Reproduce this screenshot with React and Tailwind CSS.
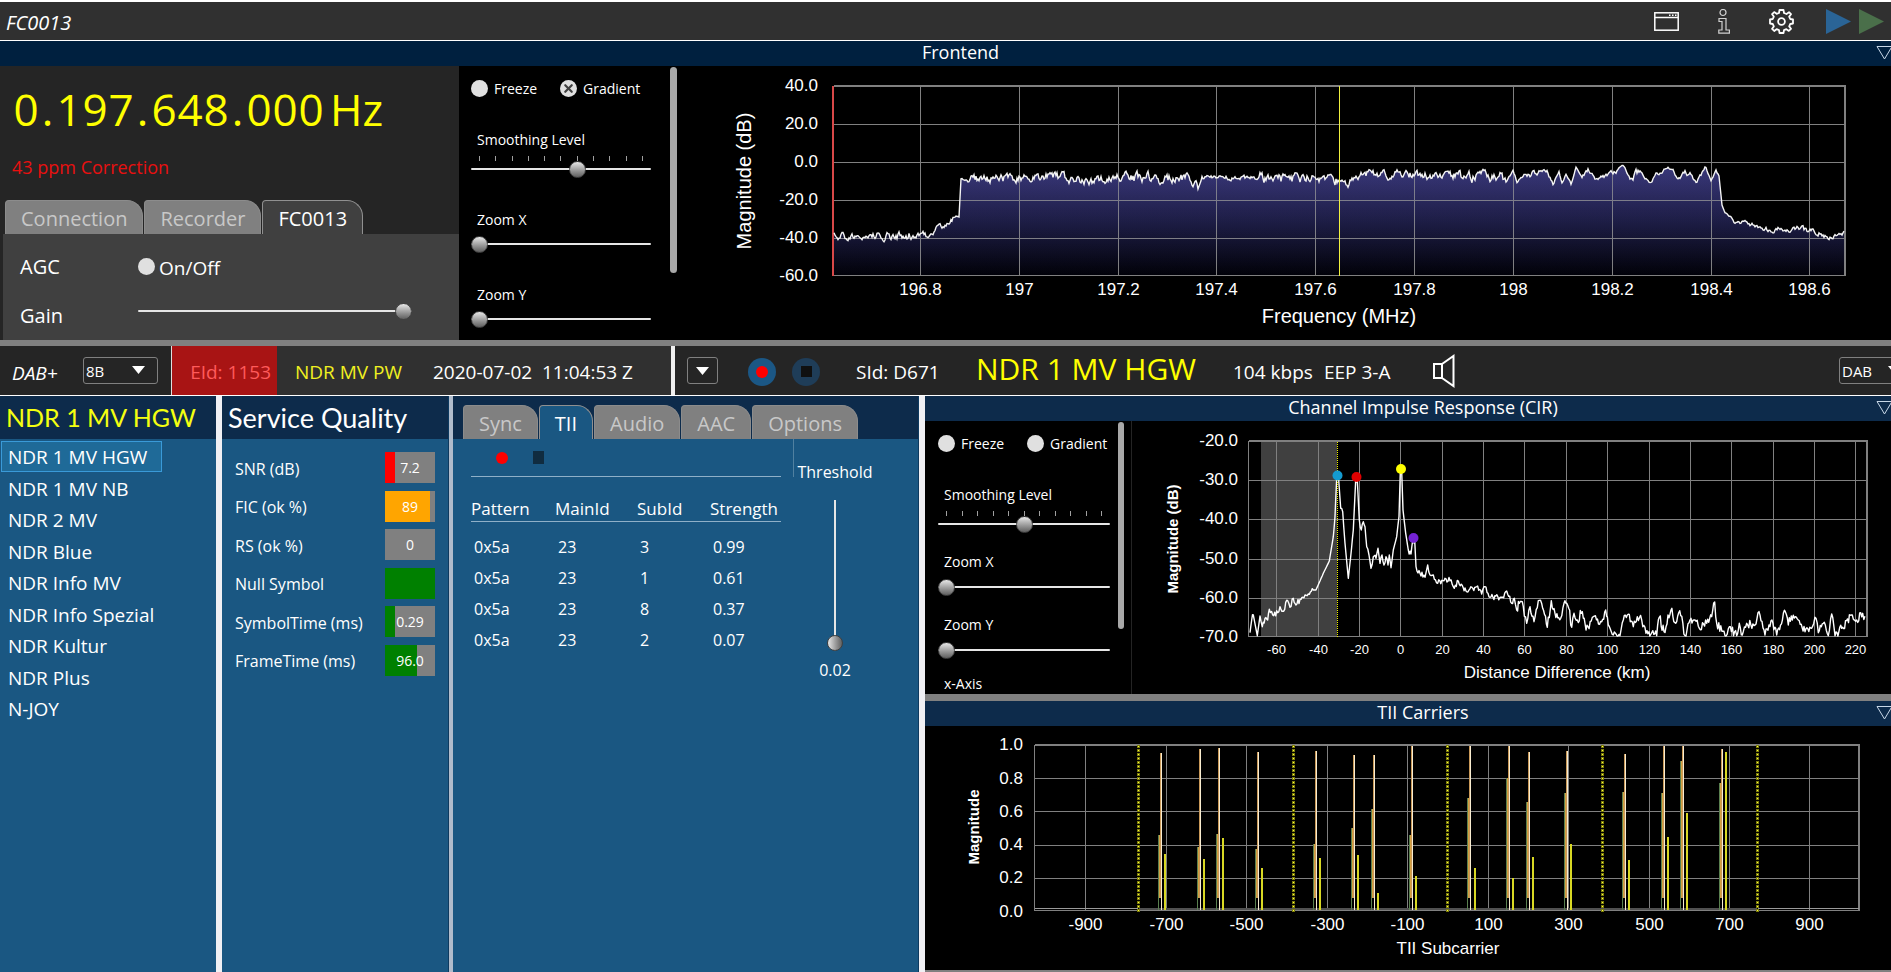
import React, { useState } from 'react';
import { X } from 'lucide-react';

const SERVICES = [
  'NDR 1 MV HGW',
  'NDR 1 MV NB',
  'NDR 2 MV',
  'NDR Blue',
  'NDR Info MV',
  'NDR Info Spezial',
  'NDR Kultur',
  'NDR Plus',
  'N-JOY',
];

const QUALITY = [
  { label: 'SNR (dB)', value: '7.2', fill: 20, color: 'bg-[#ff0000]' },
  { label: 'FIC (ok %)', value: '89', fill: 90, color: 'bg-[#ffa500]' },
  { label: 'RS (ok %)', value: '0', fill: 0, color: 'bg-[#008000]' },
  { label: 'Null Symbol', value: '', fill: 100, color: 'bg-[#008000]' },
  { label: 'SymbolTime (ms)', value: '0.29', fill: 20, color: 'bg-[#008000]' },
  { label: 'FrameTime (ms)', value: '96.0', fill: 64, color: 'bg-[#008000]' },
];

const TII_ROWS = [
  ['0x5a', '23', '3', '0.99'],
  ['0x5a', '23', '1', '0.61'],
  ['0x5a', '23', '8', '0.37'],
  ['0x5a', '23', '2', '0.07'],
];

// [left x, left top, main x, main top, right x, right top]
const CARRIERS = [
  [1159, 835, 1161, 753, 1165, 854],
  [1198, 847, 1200, 749, 1204, 859],
  [1217, 834, 1219, 748, 1223, 838],
  [1256, 849, 1258, 752, 1262, 868],
  [1314, 844, 1316, 751, 1320, 858],
  [1352, 828, 1354, 755, 1358, 855],
  [1372, 809, 1374, 755, 1378, 893],
  [1410, 835, 1412, 746, 1416, 876],
  [1468, 798, 1470, 746, 1475, 868],
  [1507, 778, 1509, 746, 1513, 878],
  [1527, 802, 1529, 752, 1533, 857],
  [1565, 793, 1567, 751, 1571, 844],
  [1623, 792, 1625, 754, 1629, 860],
  [1662, 793, 1664, 746, 1668, 837],
  [1681, 761, 1683, 746, 1687, 813],
  [1720, 783, 1722, 749, 1726, 752],
];

// impulse response, in thirds of a pixel
const CIR_HEAD = [
  [1050, 728], [1055, 690], [1060, 675], [1072, 737], [1080, 678], [1087, 710], [1095, 685], [1103, 690],
  [1108, 658], [1118, 675], [1133, 668], [1140, 650], [1148, 664], [1163, 632], [1170, 652], [1180, 625],
  [1188, 645], [1200, 628], [1215, 615], [1225, 612], [1240, 600], [1248, 600], [1270, 550], [1288, 513],
  [1300, 440], [1305, 380], [1310, 265], [1316, 270], [1322, 355], [1328, 365], [1335, 460], [1345, 565],
  [1352, 500], [1360, 420], [1367, 270], [1372, 270], [1378, 390], [1384, 420], [1390, 395], [1395, 410],
  [1400, 470], [1407, 495], [1413, 535], [1420, 500], [1428, 505], [1434, 475], [1440, 520], [1446, 495],
  [1452, 525], [1458, 500], [1464, 525], [1468, 495], [1473, 533], [1480, 480], [1490, 440], [1497, 380],
];
const CIR_TAIL = [
  [31, 245], [35, 245], [39, 360], [47, 430], [55, 480], [63, 492], [68, 450], [74, 450], [78, 530], [90, 550],
  [105, 562], [113, 525], [120, 555], [130, 555], [143, 580], [165, 565], [180, 572], [193, 595], [205, 573],
  [228, 603], [260, 590], [275, 612], [285, 590], [300, 622], [335, 622], [350, 603], [365, 640], [373, 625],
  [380, 660], [388, 640], [400, 650], [410, 700], [420, 650], [432, 695], [445, 632], [458, 655], [472, 712],
  [484, 632], [495, 670], [512, 685], [522, 640], [536, 655], [545, 712], [552, 670], [562, 690], [577, 665],
  [588, 720], [610, 680], [635, 695], [647, 660], [655, 705], [670, 735], [690, 737], [700, 690], [712, 675],
  [730, 710], [742, 680], [755, 690], [768, 730], [800, 737], [808, 682], [822, 725], [843, 660], [857, 700],
  [869, 662], [885, 737], [900, 690], [915, 690], [928, 715], [950, 700], [965, 680], [974, 636], [980, 700],
  [1005, 737], [1018, 710], [1040, 737], [1048, 700], [1057, 735], [1070, 700], [1095, 705], [1104, 668],
  [1125, 735], [1143, 692], [1160, 735], [1186, 665], [1195, 705], [1204, 678], [1225, 690], [1245, 725],
  [1265, 715], [1278, 685], [1285, 728], [1300, 700], [1315, 737], [1325, 672], [1335, 737], [1355, 715],
  [1387, 675], [1400, 690], [1418, 670], [1428, 700],
];
const CIR_ANCHORS = [
  ...CIR_HEAD.map(([x, y]) => [900 + x / 3, 390 + y / 3]),
  ...CIR_TAIL.map(([x, y]) => [1390 + x / 3, 390 + y / 3]),
];

// x, y, noise amplitude
const SPECTRUM_ANCHORS = [
  [834, 236, 4], [856, 235, 4], [860, 240, 3], [866, 236, 4], [908, 235, 4], [922, 234, 4], [927, 239, 2],
  [936, 230, 3], [946, 226, 3], [953, 217, 1], [959, 216, 1], [961, 179, 1], [968, 180, 4], [1054, 176, 5],
  [1088, 182, 4], [1120, 177, 5], [1196, 179, 2], [1198, 189, 0], [1202, 178, 2], [1260, 178, 5],
  [1350, 180, 4], [1356, 173, 4], [1450, 176, 5], [1502, 177, 5], [1506, 182, 1], [1513, 171, 1],
  [1517, 182, 1], [1524, 175, 3], [1548, 173, 2], [1553, 184, 1], [1559, 171, 1], [1562, 183, 1],
  [1566, 174, 1], [1571, 184, 1], [1576, 167, 1], [1582, 176, 3], [1589, 171, 2], [1595, 180, 2],
  [1624, 168, 2], [1630, 176, 4], [1641, 171, 2], [1647, 180, 3], [1662, 174, 3],
  [1668, 168, 1], [1673, 170, 1], [1678, 181, 2], [1685, 172, 3], [1697, 180, 2], [1706, 167, 1],
  [1711, 182, 1], [1716, 171, 1], [1719, 176, 0], [1722, 205, 0], [1725, 213, 1], [1734, 220, 2],
  [1762, 228, 3], [1788, 230, 3], [1811, 230, 3], [1828, 238, 2], [1845, 233, 3],
];

function makeRandom(seed) {
  let s = seed;
  return () => {
    s = (s * 16807) % 2147483647;
    return s / 2147483647 - 0.5;
  };
}

function spectrumPoints() {
  const rand = makeRandom(4711);
  const out = [];
  let drift = 0;
  for (let i = 0; i < SPECTRUM_ANCHORS.length - 1; i++) {
    const [x0, y0, a0] = SPECTRUM_ANCHORS[i];
    const [x1, y1] = SPECTRUM_ANCHORS[i + 1];
    for (let x = x0; x < x1; x++) {
      drift = drift * 0.6 + rand() * 2.4;
      const y = y0 + ((y1 - y0) * (x - x0)) / (x1 - x0);
      out.push(`${x},${(y + drift * a0 * 0.75).toFixed(1)}`);
    }
  }
  return out.join(' ');
}

function cirPoints() {
  const rand = makeRandom(1153);
  const out = [];
  for (let i = 0; i < CIR_ANCHORS.length - 1; i++) {
    const [x0, y0] = CIR_ANCHORS[i];
    const [x1, y1] = CIR_ANCHORS[i + 1];
    const smooth = x0 < 1435 && (Math.abs(y1 - y0) > 12 || (x0 > 1310 && x0 < 1330));
    const amp = x0 > 1515 ? 9 : 6;
    const n = Math.max(1, Math.round(x1 - x0));
    for (let k = 0; k < n; k++) {
      const y = y0 + ((y1 - y0) * k) / n + (smooth || k === 0 ? 0 : rand() * amp);
      out.push(`${(x0 + ((x1 - x0) * k) / n).toFixed(1)},${Math.min(y, 636).toFixed(1)}`);
    }
  }
  return out.join(' ');
}

const SPECTRUM = spectrumPoints();
const CIR = cirPoints();

const CHART_FONT = "font-['Liberation_Sans',Arial,sans-serif]";

const Grid = ({ xs, ys, left, right, top, bottom }) => (
  <g stroke="#808080" strokeWidth="1" shapeRendering="crispEdges">
    {xs.map((x) => <line key={x} x1={x} x2={x} y1={top} y2={bottom} />)}
    {ys.map((y) => <line key={y} x1={left} x2={right} y1={y} y2={y} />)}
    <line x1={left} x2={left} y1={top} y2={bottom} />
    <line x1={left} x2={right} y1={bottom} y2={bottom} />
    <path d={`M${left} ${top}H${right}V${bottom}`} fill="none" strokeWidth="2" />
  </g>
);

const AxisLabels = ({ items, size, anchor }) => (
  <g fill="#ffffff" fontSize={size} textAnchor={anchor}>
    {items.map(([text, x, y]) => <text key={text} x={x} y={y}>{text}</text>)}
  </g>
);

const SpectrumChart = () => {
  const ys = [124.5, 162.5, 200.5, 238.5];
  const xs = [920.5, 1019.5, 1118.5, 1216.5, 1315.5, 1414.5, 1513.5, 1612.5, 1711.5, 1809.5];
  const xText = ['196.8', '197', '197.2', '197.4', '197.6', '197.8', '198', '198.2', '198.4', '198.6'];
  const yText = ['40.0', '20.0', '0.0', '-20.0', '-40.0', '-60.0'];
  const area = `834,276 ${SPECTRUM} 1845,276`;
  return (
    <svg viewBox="680 66 1211 274" className={`block w-full h-full ${CHART_FONT}`} role="img" aria-label="Spectrum">
      <defs>
        <linearGradient id="spectrumFill" gradientUnits="userSpaceOnUse" x1="0" y1="166" x2="0" y2="276">
          <stop offset="0" stopColor="#343268" />
          <stop offset="0.5" stopColor="#19193a" />
          <stop offset="1" stopColor="#010108" />
        </linearGradient>
        <linearGradient id="spectrumTint" gradientUnits="userSpaceOnUse" x1="0" y1="166" x2="0" y2="276">
          <stop offset="0" stopColor="#6060ff" stopOpacity="0.12" />
          <stop offset="1" stopColor="#6060ff" stopOpacity="0" />
        </linearGradient>
      </defs>
      <polygon points={area} fill="url(#spectrumFill)" />
      <Grid xs={xs} ys={ys} left={833.5} right={1845} top={86} bottom={275.5} />
      <polygon points={area} fill="url(#spectrumTint)" />
      <line x1="833" x2="833" y1="86" y2="276" stroke="#d84848" strokeWidth="2" />
      <polyline points={SPECTRUM} fill="none" stroke="#f4f4f4" strokeWidth="1.4" />
      <line x1="1339.5" x2="1339.5" y1="86" y2="276" stroke="#f0f040" />
      <AxisLabels anchor="end" size="17" items={yText.map((t, i) => [t, 818, 91 + i * 38])} />
      <AxisLabels anchor="middle" size="17" items={xText.map((t, i) => [t, xs[i], 295])} />
      <text x="1339" y="323" fill="#ffffff" fontSize="20" textAnchor="middle">Frequency (MHz)</text>
      <text transform="translate(751 181) rotate(-90)" fill="#ffffff" fontSize="20" textAnchor="middle">Magnitude (dB)</text>
    </svg>
  );
};

const CirChart = () => {
  const ys = [480.5, 519.5, 559.5, 598.5];
  const xs = [1276.5, 1318.5, 1359.5, 1400.5, 1442.5, 1483.5, 1524.5, 1566.5, 1607.5, 1649.5, 1690.5, 1731.5, 1773.5, 1814.5, 1855.5];
  const yText = ['-20.0', '-30.0', '-40.0', '-50.0', '-60.0', '-70.0'];
  const yPos = [446, 485, 524, 564, 603, 642];
  return (
    <svg viewBox="1132 421 759 273" className={`block w-full h-full ${CHART_FONT}`} role="img" aria-label="Channel impulse response">
      <rect x="1261" y="442" width="76" height="194" fill="#404040" />
      <Grid xs={xs} ys={ys} left={1248.5} right={1867} top={441} bottom={636.5} />
      <polyline points={CIR} fill="none" stroke="#ffffff" strokeWidth="1.4" strokeLinejoin="round" />
      <line x1="1337.5" x2="1337.5" y1="442" y2="638" stroke="#f0f000" strokeDasharray="1 1" shapeRendering="crispEdges" />
      <circle cx="1337.5" cy="475.5" r="5" fill="#149bd0" />
      <circle cx="1356.5" cy="477" r="5" fill="#e00000" />
      <circle cx="1401" cy="469" r="5" fill="#ffff00" />
      <circle cx="1413.5" cy="538" r="5" fill="#7422d4" />
      <AxisLabels anchor="end" size="17" items={yText.map((t, i) => [t, 1238, yPos[i]])} />
      <AxisLabels anchor="middle" size="13" items={xs.map((x, i) => [String(i * 20 - 60), x, 654])} />
      <text x="1557" y="678" fill="#ffffff" fontSize="17" textAnchor="middle">Distance Difference (km)</text>
      <text transform="translate(1178 539) rotate(-90)" fill="#ffffff" fontSize="15" fontWeight="bold" textAnchor="middle">Magnitude (dB)</text>
    </svg>
  );
};

const CarrierChart = () => {
  const ys = [778.5, 811.5, 845.5, 878.5];
  const xs = [1085.5, 1166.5, 1246.5, 1327.5, 1407.5, 1488.5, 1568.5, 1649.5, 1729.5, 1809.5];
  const yText = ['1.0', '0.8', '0.6', '0.4', '0.2', '0.0'];
  const yPos = [750, 784, 817, 850, 883, 917];
  return (
    <svg viewBox="925 726 966 244" className={`block w-full h-full ${CHART_FONT}`} role="img" aria-label="TII carriers">
      <Grid xs={xs} ys={ys} left={1034.5} right={1859} top={745} bottom={910.5} />
      <g shapeRendering="crispEdges">
        <path d="M1035 908.5H1138M1758 908.5H1859" stroke="#9a9a9a" />
        <path d="M1139 909H1757" stroke="#505050" strokeWidth="2" />
        {[1138, 1293, 1447, 1602, 1757].map((x) => (
          <g key={x}>
            <line x1={x + 0.5} x2={x + 0.5} y1="745" y2="912" stroke="#7c7c0a" strokeWidth="3" strokeDasharray="3 1" />
            <line x1={x + 0.5} x2={x + 0.5} y1="746" y2="912" stroke="#ffff40" strokeDasharray="1 3" />
          </g>
        ))}
        {CARRIERS.map(([lx, lt, mx, mt, rx, rt]) => (
          <g key={mx} strokeWidth="1">
            <line x1={lx - 0.5} x2={lx - 0.5} y1={lt} y2="910" stroke="#5a8050" />
            <line x1={lx + 1} x2={lx + 1} y1={lt} y2="898" stroke="#d4a040" strokeWidth="2" />
            <line x1={mx - 0.5} x2={mx - 0.5} y1={mt} y2="898" stroke="#c89858" />
            <line x1={mx + 0.5} x2={mx + 0.5} y1={mt} y2="910" stroke="#f8ecd0" />
            <line x1={rx} x2={rx} y1={rt} y2="910" stroke="#d8d824" strokeWidth="2" />
          </g>
        ))}
      </g>
      <AxisLabels anchor="end" size="17" items={yText.map((t, i) => [t, 1023, yPos[i]])} />
      <AxisLabels anchor="middle" size="17" items={xs.map((x, i) => [String(i * 200 - 900), x, 930])} />
      <text x="1448" y="954" fill="#ffffff" fontSize="17" textAnchor="middle">TII Subcarrier</text>
      <text transform="translate(979 827) rotate(-90)" fill="#ffffff" fontSize="15" fontWeight="bold" textAnchor="middle">Magnitude</text>
    </svg>
  );
};

const Slider = ({ label, value, max = 10 }) => (
  <input
    type="range"
    aria-label={label}
    min="0"
    max={max}
    defaultValue={value}
    className="block w-full h-4 appearance-none bg-transparent [&::-webkit-slider-runnable-track]:h-[2px] [&::-webkit-slider-runnable-track]:rounded-full [&::-webkit-slider-runnable-track]:bg-[#e6e6e6] [&::-webkit-slider-thumb]:appearance-none [&::-webkit-slider-thumb]:size-[17px] [&::-webkit-slider-thumb]:-mt-[7px] [&::-webkit-slider-thumb]:rounded-full [&::-webkit-slider-thumb]:border [&::-webkit-slider-thumb]:border-[#404040] [&::-webkit-slider-thumb]:bg-linear-to-b [&::-webkit-slider-thumb]:from-[#e8e8e8] [&::-webkit-slider-thumb]:to-[#606060]"
  />
);

const Check = ({ label, checked = false, className = '' }) => {
  const [on, setOn] = useState(checked);
  return (
    <label className={`flex items-center ${className}`}>
      <span className="relative size-[17px]">
        <input
          type="checkbox"
          checked={on}
          onChange={() => setOn(!on)}
          className="block size-[17px] appearance-none rounded-full bg-[#e0e0e0]"
        />
        {on && <X className="absolute inset-0 size-[17px] p-[2px] text-[#404040] pointer-events-none" strokeWidth={4} />}
      </span>
      {label}
    </label>
  );
};

const Ticks = () => (
  <div className="flex justify-between mx-2 h-[5px]">
    {Array.from({ length: 11 }, (_, i) => <i key={i} className="w-px h-full bg-[#a0a0a0]" />)}
  </div>
);

const PanelTitle = ({ title, className }) => (
  <div className={`relative flex h-[25px] shrink-0 items-start justify-center pl-[30px] text-[18px] leading-[22px] ${className}`}>
    <h2>{title}</h2>
    <button aria-label={`Collapse ${title}`} className="absolute top-[4px] -right-[2px]">
      <svg width="17" height="15" viewBox="0 0 17 15" fill="none" stroke="#c8d8e8">
        <path d="M1 1.5H16L8.500 14Z" />
      </svg>
    </button>
  </div>
);

const Tab = ({ name, active, activeColor, onClick }) => (
  <button
    role="tab"
    aria-selected={active}
    onClick={onClick}
    className={`mr-px h-[34px] px-[15px] rounded-tl-[4px] rounded-tr-[16px] border border-b-0 pt-[2px] text-[20px] leading-8 ${
      active ? `${activeColor} border-[#909090] text-white` : 'bg-[#808080] border-[#8c8c8c] text-[#c8c8c8]'
    }`}
  >
    {name}
  </button>
);

const Combo = ({ label, value, className = '' }) => (
  <div className={`relative w-[75px] shrink-0 ${className}`}>
    <select
      aria-label={label}
      defaultValue={value}
      className="block w-full h-[27px] appearance-none rounded-[3px] border border-[#808080] bg-transparent pl-[2px] text-[15px] leading-6 text-white"
    >
      <option>{value}</option>
    </select>
    <svg className="absolute right-[13px] top-[9px] pointer-events-none" width="13" height="8" viewBox="0 0 13 8">
      <path d="M0 0H13L6.500 8Z" fill="#ffffff" />
    </svg>
  </div>
);

const AppHeader = () => (
  <header className="flex h-[41px] shrink-0 items-center border-t-2 border-b border-white bg-[#303030] pl-[6px] pr-[7px]">
    <h1 className="flex-1 text-[20px] leading-7 italic pt-[4px]">FC0013</h1>
    <button aria-label="Window" className="mr-[39px]">
      <svg width="25" height="19" viewBox="0 0 25 19" fill="none" stroke="#ffffff" strokeWidth="1.500">
        <rect x="0.800" y="0.800" width="23.400" height="17.400" />
        <path d="M1 5.500H24" />
        <path d="M15 3.200H22.500" strokeDasharray="1.500 1.500" />
      </svg>
    </button>
    <button aria-label="Info" className="mr-[39px]">
      <svg width="12" height="25" viewBox="0 0 12 25" fill="none" stroke="#d0d0d0" strokeWidth="1.200">
        <circle cx="5" cy="3.500" r="3" />
        <path d="M1 9.500H8V21H11.400V24.200H0.800V21H4V12.500H1Z" />
      </svg>
    </button>
    <button aria-label="Settings" className="mr-[32px]">
      <svg width="25" height="25" viewBox="0 0 25 25" fill="none" stroke="#ffffff" strokeWidth="1.800" strokeLinejoin="round">
        <path d="M10.5 1H14.500L15 4L17.500 5L20 3.200L22 5.200L20.200 7.600L21.200 10L24 10.500V14.500L21.200 15L20.200 17.400L22 19.800L19.800 21.900L17.400 20.200L15 21.200L14.500 24H10.500L10 21.200L7.600 20.200L5.200 22L3.100 19.800L4.800 17.400L3.800 15L1 14.500V10.500L3.800 10L4.800 7.600L3.100 5.200L5.200 3.100L7.600 4.800L10 4Z" />
        <circle cx="12.500" cy="12.500" r="3.400" />
      </svg>
    </button>
    <button aria-label="Play" className="mr-[8px]">
      <svg width="25" height="25" viewBox="0 0 25 25"><path d="M0 0L25 12.500L0 25Z" fill="#2a6496" /></svg>
    </button>
    <button aria-label="Play file">
      <svg width="25" height="25" viewBox="0 0 25 25"><path d="M0 0L25 12.500L0 25Z" fill="#4a6f4a" /></svg>
    </button>
  </header>
);

const Tuner = () => {
  const [tab, setTab] = useState('FC0013');
  return (
    <section className="flex w-[459px] shrink-0 flex-col bg-[#252525]">
      <div className="flex pl-[13px] pt-[13px] h-[86px] text-[44px] leading-[60px] text-[#ffff00]">
        {'0.197.648.000'.split('').map((c, i) => (
          <span key={i} className={c === '.' ? 'w-[17px] text-center' : 'w-[26px] text-center'}>{c}</span>
        ))}
        <span className="pl-[6px]">Hz</span>
      </div>
      <p className="pl-[12px] h-[48px] pt-[3px] text-[18px] leading-6 text-[#e81010]">43 ppm Correction</p>
      <div role="tablist" className="flex pl-[5px]">
        {['Connection', 'Recorder', 'FC0013'].map((name) => (
          <Tab key={name} name={name} active={tab === name} activeColor="bg-[#404040]" onClick={() => setTab(name)} />
        ))}
      </div>
      <div className="ml-[3px] flex-1 bg-[#404040] pl-[17px] text-[20px] leading-7">
        <div className="flex items-center pt-[17px]">
          <span className="w-[118px]">AGC</span>
          <Check label={<span className="pl-1 pt-[3px] text-[19px]">On/Off</span>} />
        </div>
        <div className="flex items-start pt-[20px]">
          <span className="w-[118px]">Gain</span>
          <div className="w-[274px] pt-[1px]"><Slider label="Gain" value={10} /></div>
        </div>
      </div>
    </section>
  );
};

const FrontendControls = () => (
  <section className="flex w-[221px] shrink-0 pl-3 text-[14px] leading-5">
    <div className="w-[180px]">
      <div className="flex pt-[11px]">
        <Check label={<span className="pl-[6px] pt-[2px]">Freeze</span>} className="w-[89px]" />
        <Check label={<span className="pl-[6px] pt-[2px]">Gradient</span>} checked />
      </div>
      <p className="pl-[6px] pt-[31px]">Smoothing Level</p>
      <div className="pt-[6px]"><Ticks /></div>
      <Slider label="Smoothing Level" value={6} />
      <p className="pl-[6px] pt-[33px]">Zoom X</p>
      <div className="pt-[6px]"><Slider label="Zoom X" value={0} /></div>
      <p className="pl-[6px] pt-[33px]">Zoom Y</p>
      <div className="pt-[6px]"><Slider label="Zoom Y" value={0} /></div>
    </div>
    <div className="ml-[19px] mt-[1px] h-[206px] w-[7px] rounded-full bg-[#a8a8a8]" />
  </section>
);

const StatusBar = () => (
  <div className="flex h-[56px] shrink-0 items-stretch overflow-hidden border-t-[6px] border-t-[#808080] border-b border-b-white bg-[#252525] text-[19px] leading-7">
    <div className="flex w-[171px] shrink-0 items-center pl-3">
      <span className="w-[71px] shrink-0 italic pt-1">DAB+</span>
      <Combo label="Channel" value="8B" />
    </div>
    <div className="flex w-[106px] shrink-0 items-center justify-end border-l border-[#e0e0e0] bg-[#a81414] pr-[6px] pt-[2px] text-[#ff5a5a]">EId: 1153</div>
    <div className="flex w-[394px] shrink-0 items-center bg-[#303030] pl-[18px] pt-[2px] whitespace-pre">
      <span className="w-[138px] text-[#f0f020]">NDR MV PW</span>
      <span>2020-07-02  11:04:53 Z</span>
    </div>
    <div className="w-[4px] shrink-0 bg-[#f0f0f0]" />
    <div className="flex min-w-0 flex-1 items-center">
      <button aria-label="Service menu" className="ml-3 mr-[30px] flex h-[27px] w-[31px] shrink-0 items-center justify-center rounded-[3px] border border-[#808080]">
        <svg width="13" height="8" viewBox="0 0 13 8"><path d="M0 0H13L6.500 8Z" fill="#ffffff" /></svg>
      </button>
      <button aria-label="Record" className="mr-4 mt-[2px] flex size-7 shrink-0 items-center justify-center rounded-full bg-[#1b5785]">
        <i className="size-3 rounded-full bg-[#ff0000]" />
      </button>
      <button aria-label="Stop" className="mt-[2px] flex size-7 shrink-0 items-center justify-center rounded-full bg-[#1f3d58]">
        <i className="size-[11px] bg-[#101010]" />
      </button>
      <span className="ml-[36px] w-[120px] shrink-0 pt-[2px]">SId: D671</span>
      <span className="w-[257px] shrink-0 pb-1 text-[30px] leading-9 text-[#ffff00]">NDR 1 MV HGW</span>
      <span className="w-[91px] shrink-0 pt-[2px]">104 kbps</span>
      <span className="w-[109px] shrink-0 pt-[2px]">EEP 3-A</span>
      <button aria-label="Mute" className="shrink-0">
        <svg width="22" height="34" viewBox="0 0 22 34" fill="none" stroke="#ffffff" strokeWidth="2">
          <path d="M1 10H9V24H1ZM9 10L20.500 2V32L9 24" />
        </svg>
      </button>
      <Combo label="Mode" value="DAB" className="ml-auto -mr-[23px]" />
    </div>
  </div>
);

const ServiceList = () => {
  const [selected, setSelected] = useState(SERVICES[0]);
  return (
    <section className="w-[216px] shrink-0">
      <h2 className="h-[43px] bg-[#0d2b4b] pl-[6px] text-[25px] leading-[43px] whitespace-nowrap text-[#f4ff10] font-['Lato',sans-serif]">NDR 1 MV HGW</h2>
      <ul className="grid h-[286px] auto-rows-fr pl-px pt-[2px] text-[19px] leading-[30px]">
        {SERVICES.map((name) => (
          <li key={name}>
            <button
              onClick={() => setSelected(name)}
              className={`h-[31px] border pl-[6px] pr-[14px] ${selected === name ? 'border-[#3a9ad8] bg-[#1f6a98]' : 'border-transparent'}`}
            >
              {name}
            </button>
          </li>
        ))}
      </ul>
    </section>
  );
};

const ServiceQuality = () => (
  <section className="w-[227px] shrink-0 border-r border-[#0d3a60]">
    <h2 className="h-[43px] bg-[#0d2b4b] pl-[6px] text-[27px] leading-[43px] whitespace-nowrap font-['Lato',sans-serif]">Service Quality</h2>
    <dl className="mt-[13px] flex h-[224px] flex-col justify-between pl-[13px] pr-[13px]">
      {QUALITY.map((q) => (
        <div key={q.label} className="flex h-[31px] items-center justify-between">
          <dt className="pt-[2px] text-[16px] leading-6">{q.label}</dt>
          <dd className="relative h-full w-[50px] bg-[#808080] text-center text-[14px] leading-[32px]">
            <i className={`absolute inset-y-0 left-0 ${q.color}`} style={{ width: `${q.fill}%` }} />
            <span className="relative">{q.value}</span>
          </dd>
        </div>
      ))}
    </dl>
  </section>
);

const TiiPanel = () => {
  const [tab, setTab] = useState('TII');
  return (
    <section className="w-[466px] shrink-0 border-r border-[#0d3a60]">
      <div role="tablist" className="flex h-[43px] items-end bg-[#0d2b4b] pl-[10px]">
        {['Sync', 'TII', 'Audio', 'AAC', 'Options'].map((name) => (
          <Tab key={name} name={name} active={tab === name} activeColor="bg-[#1a5782]" onClick={() => setTab(name)} />
        ))}
      </div>
      <div className="flex pl-[18px]">
        <div className="w-[310px]">
          <div className="flex h-[38px] items-center border-b border-[#8fb0c8] pl-[25px]">
            <button aria-label="Record TII" className="size-3 rounded-full bg-[#ff0000]" />
            <button aria-label="Stop TII" className="ml-[25px] h-[13px] w-[11px] bg-[#102c40]" />
          </div>
          <table className="mt-[20px] w-full text-left">
            <thead>
              <tr className="h-[24px] border-b border-[#8fb0c8] text-[17px] leading-[23px]">
                <th className="w-[84px] font-normal">Pattern</th>
                <th className="w-[82px] font-normal">MainId</th>
                <th className="w-[73px] font-normal">SubId</th>
                <th className="font-normal">Strength</th>
              </tr>
            </thead>
            <tbody className="text-[16px] leading-[31px] before:block before:h-[10px]">
              {TII_ROWS.map((row) => (
                <tr key={row[2]}>
                  {row.map((cell, i) => <td key={i} className="pl-[3px]">{cell}</td>)}
                </tr>
              ))}
            </tbody>
          </table>
        </div>
        <div className="ml-[12px] h-[38px] w-px bg-[#5080a0]" />
        <div className="flex w-[82px] flex-col items-center pt-[21px] text-[16px] leading-6">
          <label htmlFor="threshold">Threshold</label>
          <input
            id="threshold"
            type="range"
            min="0"
            max="1"
            step="0.01"
            defaultValue="0"
            className="mt-[16px] h-[151px] w-4 appearance-none bg-transparent [writing-mode:vertical-lr] [direction:rtl] [&::-webkit-slider-runnable-track]:w-[2px] [&::-webkit-slider-runnable-track]:bg-[#e6e6e6] [&::-webkit-slider-thumb]:appearance-none [&::-webkit-slider-thumb]:size-4 [&::-webkit-slider-thumb]:-ml-[7px] [&::-webkit-slider-thumb]:rounded-full [&::-webkit-slider-thumb]:border [&::-webkit-slider-thumb]:border-[#404040] [&::-webkit-slider-thumb]:bg-linear-to-r [&::-webkit-slider-thumb]:from-[#e8e8e8] [&::-webkit-slider-thumb]:to-[#606060]"
          />
          <output className="mt-[7px]">0.02</output>
        </div>
      </div>
    </section>
  );
};

const CirControls = () => (
  <section className="flex w-[207px] shrink-0 border-r border-[#242424] pl-[13px] text-[14px] leading-5">
    <div className="w-[172px]">
      <div className="flex pt-[11px]">
        <Check label={<span className="pl-[6px] pt-[2px]">Freeze</span>} className="w-[89px]" />
        <Check label={<span className="pl-[6px] pt-[2px]">Gradient</span>} />
      </div>
      <p className="pl-[6px] pt-[31px]">Smoothing Level</p>
      <div className="pt-[6px]"><Ticks /></div>
      <Slider label="CIR Smoothing Level" value={5} />
      <p className="pl-[6px] pt-[20px]">Zoom X</p>
      <div className="pt-[7px]"><Slider label="CIR Zoom X" value={0} /></div>
      <p className="pl-[6px] pt-[20px]">Zoom Y</p>
      <div className="pt-[7px]"><Slider label="CIR Zoom Y" value={0} /></div>
      <p className="pl-[6px] pt-[17px] leading-[18px]">x-Axis</p>
    </div>
    <div className="ml-[8px] mt-[1px] h-[207px] w-[6px] rounded-full bg-[#a8a8a8]" />
  </section>
);

const App = () => (
  <div className="flex min-h-screen flex-col overflow-hidden bg-black text-white font-['Open_Sans','Noto_Sans',sans-serif]">
    <AppHeader />
    <PanelTitle title="Frontend" className="bg-[#00203f]" />
    <div className="flex min-h-[274px]">
      <Tuner />
      <FrontendControls />
      <div className="min-w-0 flex-1"><SpectrumChart /></div>
    </div>
    <StatusBar />
    <div className="flex flex-1 bg-[#1a5782]">
      <ServiceList />
      <div className="w-[6px] shrink-0 bg-[#f0f0f4]" />
      <ServiceQuality />
      <div className="w-[4px] shrink-0 bg-[#b0bccc]" />
      <TiiPanel />
      <div className="w-[6px] shrink-0 bg-[#f0f0f4]" />
      <div className="flex min-w-0 flex-1 flex-col bg-black">
        <PanelTitle title="Channel Impulse Response (CIR)" className="bg-[#0d2b4b]" />
        <div className="flex">
          <CirControls />
          <div className="min-w-0 flex-1"><CirChart /></div>
        </div>
        <div className="h-[7px] shrink-0 bg-[#808080]" />
        <PanelTitle title="TII Carriers" className="bg-[#0d2b4b]" />
        <CarrierChart />
        <div className="h-[2px] shrink-0 bg-[#808080]" />
      </div>
    </div>
  </div>
);

export default App;
